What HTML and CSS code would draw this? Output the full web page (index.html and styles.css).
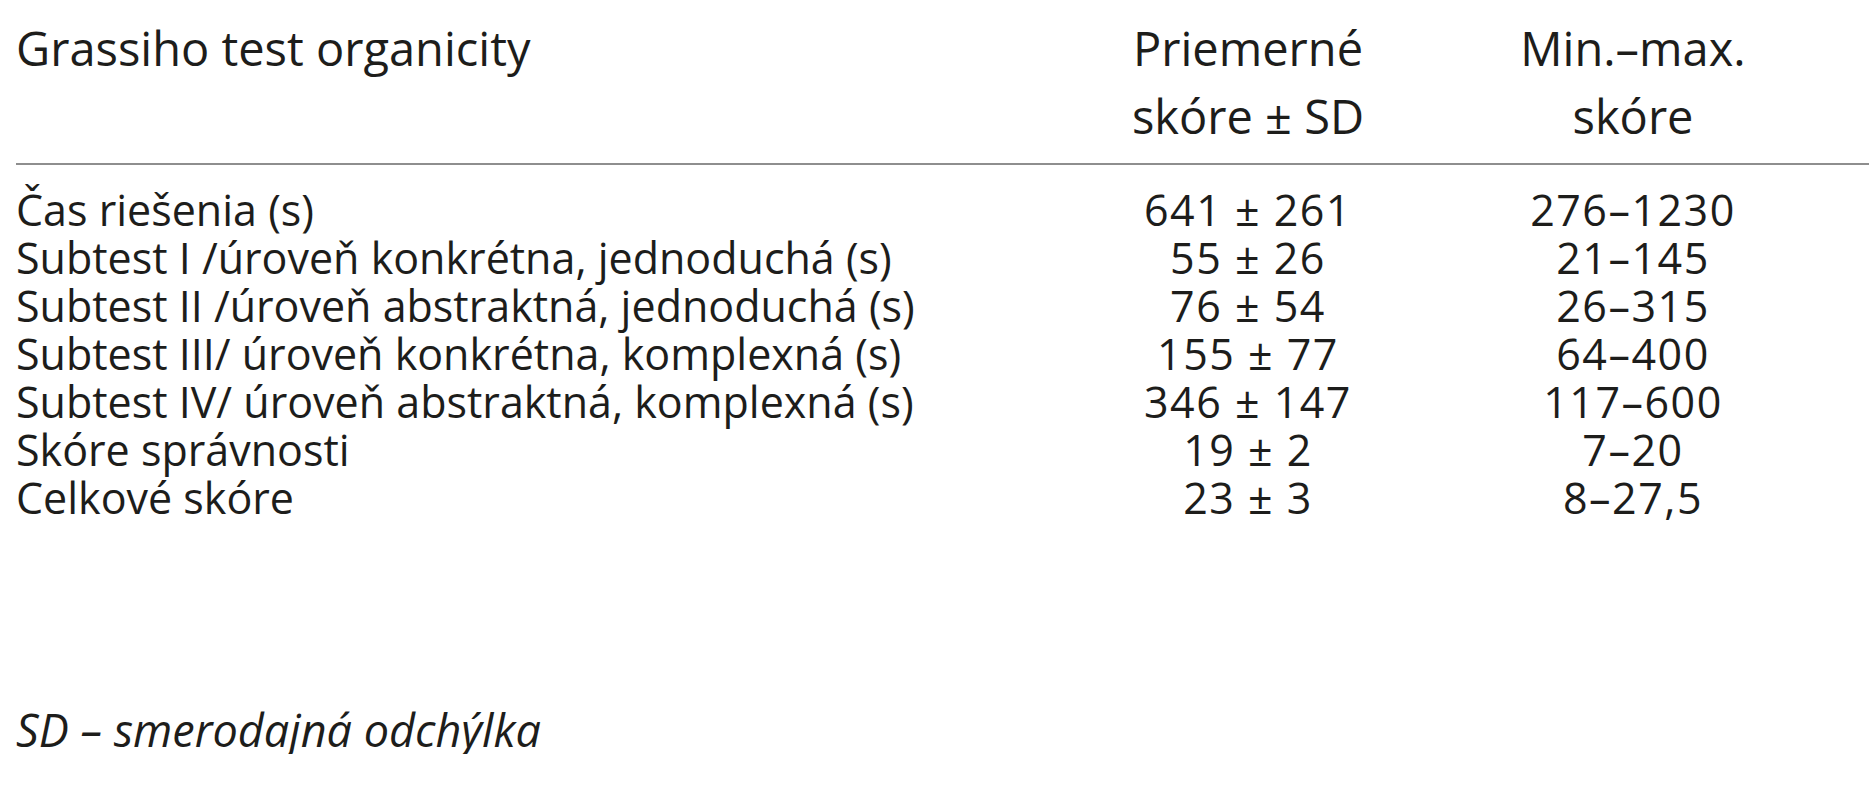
FILE: index.html
```html
<!DOCTYPE html>
<html lang="sk">
<head>
<meta charset="utf-8">
<title>Grassiho test organicity</title>
<link rel="stylesheet" href="styles.css">
</head>
<body>
<div class="page">
  <div class="table">
    <div class="head">
      <div class="cell first">Grassiho test organicity</div>
      <div class="cell num">Priemerné<br>skóre ± SD</div>
      <div class="cell num">Min.–max.<br>skóre</div>
    </div>
    <div class="body">
      <div class="cell first">Čas riešenia (s)</div><div class="cell num val">641 ± 261</div><div class="cell num val">276–1230</div>
      <div class="cell first">Subtest I /úroveň konkrétna, jednoduchá (s)</div><div class="cell num val">55 ± 26</div><div class="cell num val">21–145</div>
      <div class="cell first">Subtest II /úroveň abstraktná, jednoduchá (s)</div><div class="cell num val">76 ± 54</div><div class="cell num val">26–315</div>
      <div class="cell first">Subtest III/ úroveň konkrétna, komplexná (s)</div><div class="cell num val">155 ± 77</div><div class="cell num val">64–400</div>
      <div class="cell first">Subtest IV/ úroveň abstraktná, komplexná (s)</div><div class="cell num val">346 ± 147</div><div class="cell num val">117–600</div>
      <div class="cell first">Skóre správnosti</div><div class="cell num val">19 ± 2</div><div class="cell num val">7–20</div>
      <div class="cell first">Celkové skóre</div><div class="cell num val">23 ± 3</div><div class="cell num val">8–27,5</div>
    </div>
  </div>
  <p class="note">SD – smerodajná odchýlka</p>
</div>
</body>
</html>
```

FILE: styles.css
```css
html, body {
  margin: 0;
  padding: 0;
  background: #ffffff;
}

.page {
  padding-left: 16px;
  font-family: "Open Sans", "Noto Sans", "DejaVu Sans", sans-serif;
  font-size: 43px;
  color: #1d1d1b;
}

.head,
.body {
  display: grid;
  grid-template-columns: 1036px 380px 378px;
  column-gap: 6px;
}

.head {
  padding-top: 14px;
  padding-bottom: 13px;
  font-size: 47px;
  line-height: 68px;
  border-bottom: 2px solid #8e8e8e;
}

.body {
  padding-top: 21px;
  line-height: 48px;
}

.cell {
  white-space: nowrap;
}

.first {
  text-align: left;
}

.num {
  text-align: center;
}

.val {
  letter-spacing: 1.5px;
}

.note {
  margin: 184px 0 0 0;
  font-size: 45px;
  line-height: 48px;
  font-style: italic;
}
```
